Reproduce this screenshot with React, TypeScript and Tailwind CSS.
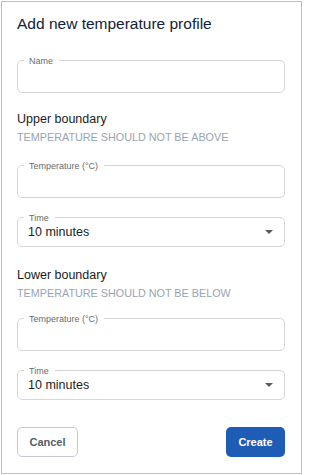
import React from "react";

const TextField = ({ label, className = "" }: { label: string; className?: string }) => {
  return (
    <div className={`relative h-[33px] rounded-[5px] border border-[#d6d6d6] ${className}`}>
      <span className="absolute left-[6px] top-0 -translate-y-1/2 bg-white pl-[5px] pr-[6px] text-[9px] leading-[10px] text-[#6a6a6a]">
        {label}
      </span>
    </div>
  );
};

const SelectField = ({
  label,
  value,
  className = "",
}: {
  label: string;
  value: string;
  className?: string;
}) => {
  return (
    <div
      className={`relative flex h-[30px] items-center justify-between rounded-[5px] border border-[#d6d6d6] pl-[10px] pr-[10px] ${className}`}
    >
      <span className="absolute left-[6px] top-0 -translate-y-1/2 bg-white pl-[5px] pr-[6px] text-[9px] leading-[10px] text-[#6a6a6a]">
        {label}
      </span>
      <span className="text-[12.5px] leading-[16px] text-[#1c1c1c]">{value}</span>
      <svg width="8" height="4" viewBox="0 0 8 4" className="mr-[1px]">
        <polygon points="0,0 8,0 4,4" fill="#5a5a5a" />
      </svg>
    </div>
  );
};

const Section = ({ title, hint, className = "" }: { title: string; hint: string; className?: string }) => {
  return (
    <div className={className}>
      <div className="text-[12.5px] leading-[16px] text-[#1b1b1b]">{title}</div>
      <div className="mt-[3px] text-[10.8px] leading-[14px] text-[#98a3b2]">{hint}</div>
    </div>
  );
};

export default function App() {
  return (
    <div
      className="h-[475px] w-[303px] bg-white p-px"
      style={{ fontFamily: '"Liberation Sans", Arial, sans-serif' }}
    >
      <div className="flex h-[473px] w-[301px] flex-col border border-[#b3c0d4] pl-[15px] pr-[16px] pt-[12px]">
        <h2 className="text-[15.5px] leading-[20px] text-[#14203b]">Add new temperature profile</h2>

        <TextField label="Name" className="mt-[26px]" />

        <Section title="Upper boundary" hint="TEMPERATURE SHOULD NOT BE ABOVE" className="mt-[18px]" />
        <TextField label="Temperature (°C)" className="mt-[21px]" />
        <SelectField label="Time" value="10 minutes" className="mt-[19px]" />

        <Section title="Lower boundary" hint="TEMPERATURE SHOULD NOT BE BELOW" className="mt-[20px]" />
        <TextField label="Temperature (°C)" className="mt-[18px]" />
        <SelectField label="Time" value="10 minutes" className="mt-[19px]" />

        <div className="mt-[27px] flex items-center justify-between">
          <button className="h-[30px] w-[61px] rounded-[5px] border border-[#c5cad2] bg-white text-[11px] font-bold text-[#525c6a]">
            Cancel
          </button>
          <button className="h-[30px] w-[59px] rounded-[5px] bg-[#1f5cb6] text-[11px] font-bold text-white">
            Create
          </button>
        </div>
      </div>
    </div>
  );
}
